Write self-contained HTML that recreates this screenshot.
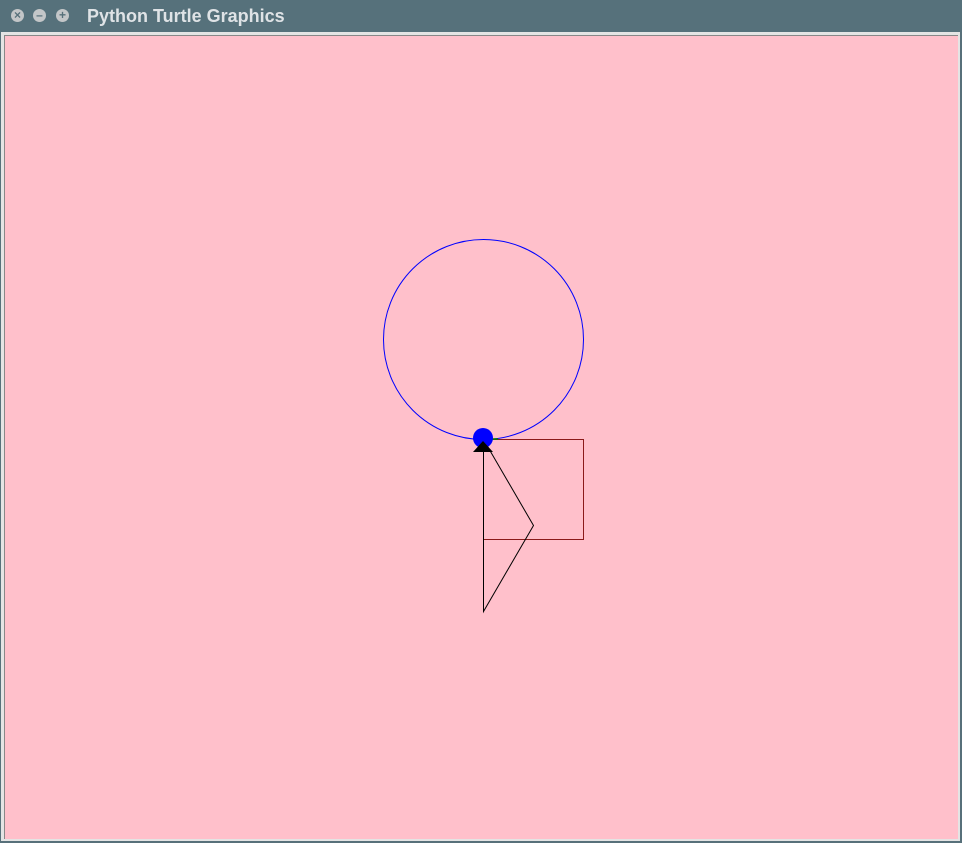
<!DOCTYPE html>
<html><head><style>
body{margin:0;width:962px;height:843px;background:#57707a;overflow:hidden;font-family:"Liberation Sans",sans-serif}
.title{position:absolute;left:0;top:0;width:962px;height:32px;background:#56717b}
.t{position:absolute;left:87px;top:6px;color:#dfe3e6;font-weight:bold;font-size:18px}
.b{position:absolute;top:9px;width:13px;height:13px;border-radius:50%;background:#c3c6c8;color:#57707a;font-size:12px;line-height:13px;text-align:center;font-weight:bold}
.frame{position:absolute;left:1px;top:32px;width:959px;height:809px;background:#e4e4e4}
.canvas{position:absolute;left:3px;top:3px;width:953px;height:803px;background:#ffc0cb;border-top:1px solid #888;border-left:1px solid #888}
svg{position:absolute;left:0;top:0}
</style></head><body>
<div class="title"><div class="b" style="left:11px">×</div><div class="b" style="left:33px">–</div><div class="b" style="left:56px">+</div><div class="t">Python Turtle Graphics</div></div>
<div class="frame"><div class="canvas"></div></div>
<svg width="962" height="843">
<circle cx="483.5" cy="339.5" r="100" fill="none" stroke="#0000ff" stroke-width="1"/>
<rect x="483.5" y="439.5" width="100" height="100" fill="none" stroke="#8b1a1a" stroke-width="1"/>
<polyline points="483.5,439.5 533.5,525.5 483.5,611.5 483.5,439.5" fill="none" stroke="#000" stroke-width="1"/>
<line x1="483" y1="439" x2="498" y2="439" stroke="green" stroke-width="1.5"/>
<circle cx="483" cy="438" r="10" fill="#0000ff"/>
<polygon points="483,441 473,452 493,452" fill="#000"/>
</svg>
</body></html>
